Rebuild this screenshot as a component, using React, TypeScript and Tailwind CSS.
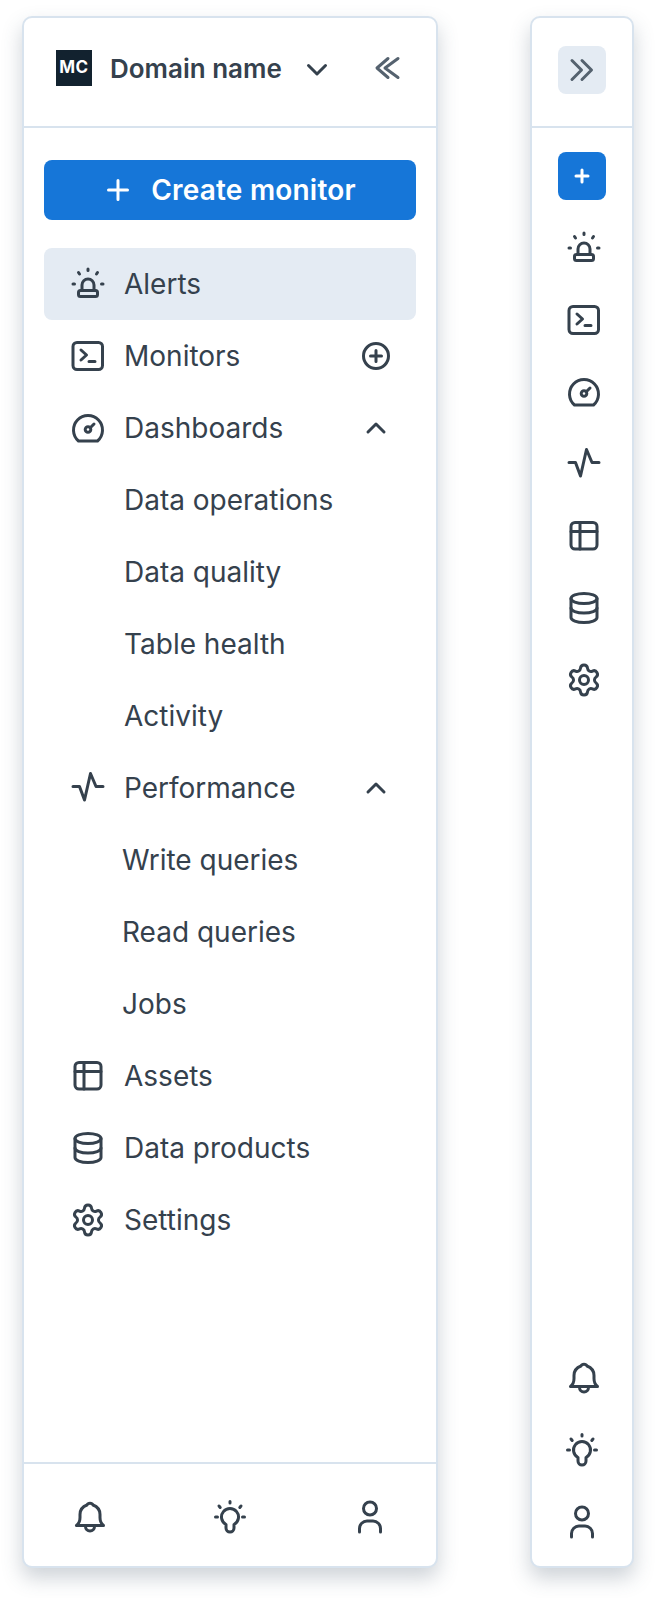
import React from "react";
import { Settings } from "lucide-react";

type IconProps = { children: React.ReactNode; className?: string };
const Ico = ({ children, className = "" }: IconProps) => (
  <svg
    width="36"
    height="36"
    viewBox="0 0 36 36"
    fill="none"
    stroke="currentColor"
    strokeWidth="3"
    strokeLinecap="round"
    strokeLinejoin="round"
    className={"shrink-0 " + className}
  >
    {children}
  </svg>
);

const Alert = () => (
  <Ico>
    <rect x="8.5" y="24.5" width="19" height="6" rx="2" />
    <path d="M12 24v-5a6 6 0 0 1 12 0v5" />
    <path d="M18 3v1.5M8.5 6.5l1 1.5M27.5 6.5l-1 1.5M3 18h1.5M31.5 18H33" />
  </Ico>
);
const Terminal = () => (
  <Ico>
    <rect x="3" y="4.5" width="29.500" height="27" rx="4" />
    <path d="M11 12l5.5 5-5.5 5M19 23.5h6" />
  </Ico>
);
const Gauge = () => (
  <Ico>
    <path d="M8.5 31A14.5 14.5 0 1 1 27.5 31Z" />
    <circle cx="18" cy="19.500" r="2.800" />
    <path d="M20.500 17.500l3.500-3.500" />
  </Ico>
);
const Pulse = () => (
  <Ico>
    <path d="M3 16.5h6.5L14.5 30l6-26.500 5.500 13H33" />
  </Ico>
);
const TableI = () => (
  <Ico>
    <rect x="5" y="4.5" width="26" height="26.500" rx="4" />
    <path d="M5 13.5h26M14 4.5v26.500" />
  </Ico>
);
const Db = () => (
  <Ico>
    <ellipse cx="18" cy="8.5" rx="13" ry="5" />
    <path d="M5 8.5v19c0 2.8 5.8 5 13 5s13-2.2 13-5v-19" />
    <path d="M5 18c0 2.8 5.8 5 13 5s13-2.2 13-5" />
  </Ico>
);
const Gear = () => <Settings size={36} strokeWidth={2} className="shrink-0" />;
const Bell = () => (
  <Ico>
    <path d="M4.5 26.5h27c-2.5-2-3.500-4-3.500-8v-3c0-5-3-8-7-9.500-1-2.500-5-2.500-6 0-4 1.500-7 4.500-7 9.500v3c0 4-1 6-3.500 8Z" />
    <path d="M13.5 27.5a4.5 4.5 0 0 0 9 0" />
  </Ico>
);
const Bulb = () => (
  <Ico>
    <path d="M14 25.5a8.5 8.5 0 1 1 8 0V29a4 4 0 0 1-8 0Z" />
    <path d="M18 2.5V4M7 7l1.2 1.5M29 7l-1.2 1.5M3.5 18H5.5M30.5 18h2" />
  </Ico>
);
const Person = () => (
  <Ico>
    <circle cx="18" cy="9.5" r="6.5" />
    <path d="M7.5 33v-3.500a7.500 7.500 0 0 1 7.500-7.500h6a7.500 7.500 0 0 1 7.500 7.500V33" />
  </Ico>
);
const PlusCircle = () => (
  <Ico>
    <circle cx="18" cy="18" r="12.500" />
    <path d="M18 12.500v11M12.500 18h11" />
  </Ico>
);
const Up = () => (
  <Ico>
    <path d="M10 22l8-8 8 8" />
  </Ico>
);

const Row = ({
  icon,
  label,
  right,
  active,
  nudge,
}: {
  icon?: React.ReactNode;
  label: string;
  right?: React.ReactNode;
  active?: boolean;
  nudge?: boolean;
}) => (
  <div
    className={
      "flex h-[72px] items-center rounded-[8px] pl-[26px] pr-[22px] " +
      (active ? "bg-[#e4ebf3]" : "")
    }
  >
    {icon ? <span className="mr-[18px] flex">{icon}</span> : <span className="w-[54px] shrink-0" />}
    <span className={"flex-1 " + (nudge ? "-ml-[2px]" : "")}>{label}</span>
    {right}
  </div>
);

const Rail = ({ children, shift }: { children: React.ReactNode; shift?: boolean }) => (
  <div className={"flex h-[72px] items-center justify-center " + (shift ? "pl-[3px]" : "")}>{children}</div>
);

const panel =
  "flex h-[1552px] flex-col rounded-[10px] border-2 border-[#d8e3ee] bg-white shadow-[0_10px_20px_rgba(60,80,100,0.25)]";

export default function App() {
  return (
    <div
      className="flex min-h-[1598px] items-start gap-[92px] bg-white pl-[22px] pt-[16px] text-[28px] text-[#35414d] [font-optical-sizing:none]"
      style={{ fontFamily: "Inter, 'Noto Sans', sans-serif" }}
    >
      <div className={panel + " w-[416px]"}>
        <div className="flex h-[110px] shrink-0 items-center border-b-2 border-[#d8e3ee] pb-[8px] pl-[32px]">
          <div className="flex h-[36px] w-[36px] items-center justify-center bg-[#12222f] text-[17px] font-bold tracking-[0.5px] text-white">
            MC
          </div>
          <span className="ml-[18px] w-[172px] whitespace-nowrap text-[26px] font-semibold">Domain name</span>
          <svg width="24" height="16" viewBox="0 0 24 16" fill="none" stroke="currentColor" strokeWidth="3" strokeLinecap="round" strokeLinejoin="round" className="ml-[23px] mt-[3px]">
            <path d="M3.500 3.500L12 12l8.500-8.500" />
          </svg>
          <svg width="28" height="28" viewBox="0 0 28 28" fill="none" stroke="#55626f" strokeWidth="3" strokeLinecap="round" strokeLinejoin="round" className="ml-[45px]">
            <path d="M14 4.500L3 14l11 9.500M24 4.500L11 14l13 9.500" />
          </svg>
        </div>
        <div className="flex flex-1 flex-col px-[20px] pt-[32px]">
          <div className="flex h-[60px] items-center justify-center rounded-[8px] bg-[#1676d8] pl-[2px] font-semibold tracking-[0.2px] text-white">
            <svg width="24" height="24" viewBox="0 0 24 24" fill="none" stroke="currentColor" strokeWidth="3" strokeLinecap="round" className="mr-[21px]">
              <path d="M12 2.500v19M2.500 12h19" />
            </svg>
            Create monitor
          </div>
          <div className="mt-[28px] flex flex-col">
            <Row icon={<Alert />} label="Alerts" active />
            <Row icon={<Terminal />} label="Monitors" right={<PlusCircle />} />
            <Row icon={<Gauge />} label="Dashboards" right={<Up />} />
            <Row label="Data operations" />
            <Row label="Data quality" />
            <Row label="Table health" />
            <Row label="Activity" />
            <Row icon={<Pulse />} label="Performance" right={<Up />} />
            <Row label="Write queries" nudge />
            <Row label="Read queries" nudge />
            <Row label="Jobs" nudge />
            <Row icon={<TableI />} label="Assets" />
            <Row icon={<Db />} label="Data products" />
            <Row icon={<Gear />} label="Settings" />
          </div>
        </div>
        <div className="flex h-[104px] shrink-0 items-center justify-between border-t-2 border-[#d8e3ee] px-[48px] pt-[4px]">
          <Bell />
          <Bulb />
          <Person />
        </div>
      </div>

      <div className={panel + " w-[104px]"}>
        <div className="flex h-[110px] shrink-0 items-center justify-center border-b-2 border-[#d8e3ee] pb-[4px]">
          <div className="flex h-[48px] w-[48px] items-center justify-center rounded-[8px] bg-[#e4ebf3]">
            <svg width="26" height="24" viewBox="0 0 26 24" fill="none" stroke="#55626f" strokeWidth="3" strokeLinecap="round" strokeLinejoin="round">
              <path d="M3 2.500L12.500 12 3 21.500M13 2.500L22.500 12 13 21.500" />
            </svg>
          </div>
        </div>
        <div className="flex flex-1 flex-col items-stretch pt-[24px]">
          <div className="mx-auto flex h-[48px] w-[48px] items-center justify-center rounded-[8px] bg-[#1676d8]">
            <svg width="16" height="16" viewBox="0 0 16 16" fill="none" stroke="white" strokeWidth="3" strokeLinecap="round">
              <path d="M8 2v12M2 8h12" />
            </svg>
          </div>
          <div className="mt-[12px] flex flex-col">
            <Rail shift><Alert /></Rail>
            <Rail shift><Terminal /></Rail>
            <Rail shift><Gauge /></Rail>
            <Rail shift><Pulse /></Rail>
            <Rail shift><TableI /></Rail>
            <Rail shift><Db /></Rail>
            <Rail shift><Gear /></Rail>
          </div>
          <div className="mt-auto flex flex-col pb-[8px]">
            <Rail shift><Bell /></Rail>
            <Rail><Bulb /></Rail>
            <Rail><Person /></Rail>
          </div>
        </div>
      </div>
    </div>
  );
}
